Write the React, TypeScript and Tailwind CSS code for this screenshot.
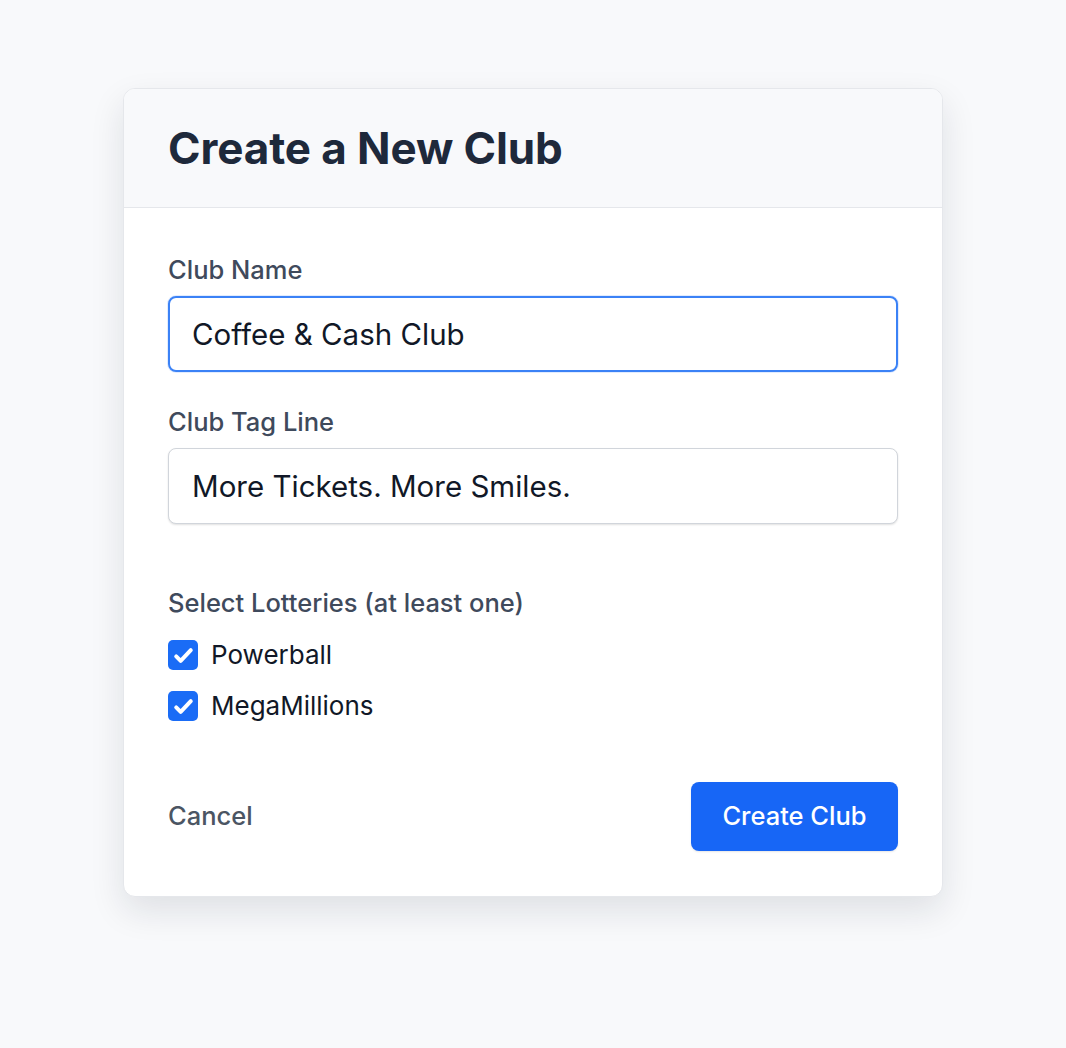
import { useState } from "react";

type Lottery = { id: string; label: string };

const lotteries: Lottery[] = [
  { id: "powerball", label: "Powerball" },
  { id: "megamillions", label: "MegaMillions" },
];

function CheckBox({ checked, onChange }: { checked: boolean; onChange: () => void }) {
  return (
    <button
      type="button"
      role="checkbox"
      aria-checked={checked}
      onClick={onChange}
      className={
        checked
          ? "flex h-[30px] w-[30px] items-center justify-center rounded-[5px] bg-[#1a6cf6]"
          : "flex h-[30px] w-[30px] items-center justify-center rounded-[5px] border-2 border-gray-300 bg-white"
      }
    >
      {checked && (
        <svg viewBox="0 0 24 24" className="h-[25px] w-[25px]" fill="none">
          <path
            d="M5 12.8l4.3 4.4L19 6.8"
            stroke="white"
            strokeWidth="3.8"
            strokeLinecap="round"
            strokeLinejoin="round"
          />
        </svg>
      )}
    </button>
  );
}

export default function App() {
  const [name, setName] = useState("Coffee & Cash Club");
  const [tagLine, setTagLine] = useState("More Tickets. More Smiles.");
  const [selected, setSelected] = useState<Record<string, boolean>>({
    powerball: true,
    megamillions: true,
  });

  const toggle = (id: string) => setSelected((s) => ({ ...s, [id]: !s[id] }));

  return (
    <div className="min-h-screen bg-[#f8f9fb] pt-[88px] font-['Inter',sans-serif]">
      <div className="mx-auto w-[820px] overflow-hidden rounded-[12px] border border-[#e5e7eb] bg-white shadow-[0_14px_34px_rgba(15,23,42,0.11)]">
        <div className="flex h-[119px] items-center border-b border-[#e5e7eb] bg-[#f8f9fb] px-11">
          <h1 className="text-[44px] font-bold tracking-[-0.1px] text-[#1e293b]">Create a New Club</h1>
        </div>

        <div className="px-11 pb-[45px] pt-[46px]">
          <label className="block text-[25.5px] font-medium leading-[32px] text-[#3f4a5c]">Club Name</label>
          <input
            value={name}
            onChange={(e) => setName(e.target.value)}
            className="mt-[10px] block h-[76px] w-full rounded-[8px] border-2 border-[#3b82f6] bg-white px-[22px] text-[29.5px] text-[#111827] outline-none shadow-[0_0_0_1px_rgba(59,130,246,0.15)]"
          />

          <label className="mt-[34px] block text-[25.5px] font-medium leading-[32px] text-[#3f4a5c]">Club Tag Line</label>
          <input
            value={tagLine}
            onChange={(e) => setTagLine(e.target.value)}
            className="mt-[10px] block h-[76px] w-full rounded-[8px] border border-[#d1d5db] bg-white px-[23px] text-[29.5px] text-[#111827] outline-none shadow-[0_1px_2px_rgba(0,0,0,0.12)]"
          />

          <p className="mt-[63px] text-[25.5px] font-medium leading-[32px] text-[#3f4a5c]">Select Lotteries (at least one)</p>
          <div className="mt-[21px] flex flex-col gap-[21px]">
            {lotteries.map((l) => (
              <label key={l.id} className="flex items-center gap-[13px]">
                <CheckBox checked={!!selected[l.id]} onChange={() => toggle(l.id)} />
                <span className="text-[26px] leading-[30px] text-[#111827]">{l.label}</span>
              </label>
            ))}
          </div>

          <div className="mt-[61px] flex items-center justify-between">
            <button type="button" className="text-[25.5px] font-medium text-[#4b5563]">
              Cancel
            </button>
            <button
              type="button"
              className="h-[69px] w-[207px] rounded-[8px] bg-[#1766f6] text-[25.5px] font-medium text-white shadow-[0_1px_2px_rgba(0,0,0,0.1)]"
            >
              Create Club
            </button>
          </div>
        </div>
      </div>
    </div>
  );
}
